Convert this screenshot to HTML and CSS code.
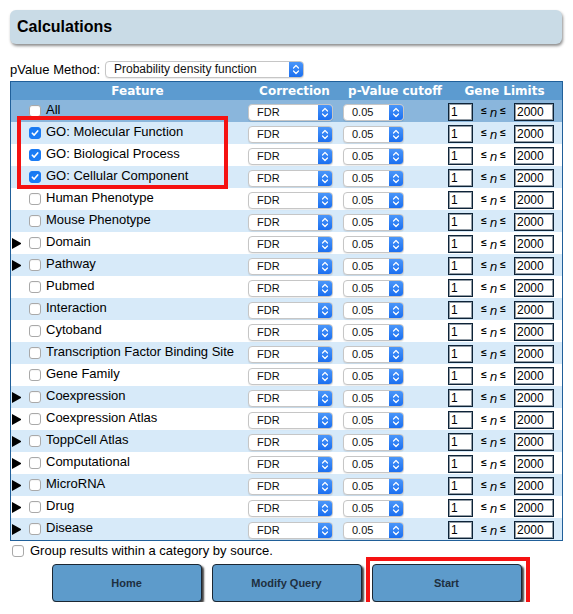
FILE: index.html
```html
<!DOCTYPE html>
<html>
<head>
<meta charset="utf-8">
<title>Calculations</title>
<link rel="stylesheet" href="styles.css">
</head>
<body>
<div class="page">
  <div class="titlebox"><h1>Calculations</h1></div>

  <div class="method">
    <span class="method-label">pValue Method:</span>
    <div class="sel s-wide"><span class="sel-text">Probability density function</span><span class="sel-btn"><svg width="8" height="11" viewBox="0 0 8 11"><path d="M1.5 4 L4 1.5 L6.5 4 M1.5 7 L4 9.5 L6.5 7" fill="none" stroke="#fff" stroke-width="1.2" stroke-linecap="round" stroke-linejoin="round"/></svg></span></div>
  </div>

  <div class="tbl">
    <div class="row head"><div class="c1">Feature</div><div>Correction</div><div>p-Value cutoff</div><div>Gene Limits</div></div>

    <div class="row all">
      <div class="feat"><span class="tri"></span><span class="cb"></span><span class="lbl">All</span></div>
      <div class="corr"><div class="sel s-corr"><span class="sel-text">FDR</span><span class="sel-btn"><svg width="8" height="11" viewBox="0 0 8 11"><path d="M1.5 4 L4 1.5 L6.5 4 M1.5 7 L4 9.5 L6.5 7" fill="none" stroke="#fff" stroke-width="1.2" stroke-linecap="round" stroke-linejoin="round"/></svg></span></div></div>
      <div class="pv"><div class="sel s-pv"><span class="sel-text">0.05</span><span class="sel-btn"><svg width="8" height="11" viewBox="0 0 8 11"><path d="M1.5 4 L4 1.5 L6.5 4 M1.5 7 L4 9.5 L6.5 7" fill="none" stroke="#fff" stroke-width="1.2" stroke-linecap="round" stroke-linejoin="round"/></svg></span></div></div>
      <div class="gl"><span class="inp i1">1</span><span class="rel"><span class="le">≤</span><i>n</i><span class="le">≤</span></span><span class="inp i2">2000</span></div>
    </div>

    <div class="row alt">
      <div class="feat"><span class="tri"></span><span class="cb on"><svg width="8" height="8" viewBox="0 0 8 8"><path d="M1.3 4.2 L3.2 6.1 L6.7 1.9" fill="none" stroke="#fff" stroke-width="1.6" stroke-linecap="round" stroke-linejoin="round"/></svg></span><span class="lbl">GO: Molecular Function</span></div>
      <div class="corr"><div class="sel s-corr"><span class="sel-text">FDR</span><span class="sel-btn"><svg width="8" height="11" viewBox="0 0 8 11"><path d="M1.5 4 L4 1.5 L6.5 4 M1.5 7 L4 9.5 L6.5 7" fill="none" stroke="#fff" stroke-width="1.2" stroke-linecap="round" stroke-linejoin="round"/></svg></span></div></div>
      <div class="pv"><div class="sel s-pv"><span class="sel-text">0.05</span><span class="sel-btn"><svg width="8" height="11" viewBox="0 0 8 11"><path d="M1.5 4 L4 1.5 L6.5 4 M1.5 7 L4 9.5 L6.5 7" fill="none" stroke="#fff" stroke-width="1.2" stroke-linecap="round" stroke-linejoin="round"/></svg></span></div></div>
      <div class="gl"><span class="inp i1">1</span><span class="rel"><span class="le">≤</span><i>n</i><span class="le">≤</span></span><span class="inp i2">2000</span></div>
    </div>

    <div class="row">
      <div class="feat"><span class="tri"></span><span class="cb on"><svg width="8" height="8" viewBox="0 0 8 8"><path d="M1.3 4.2 L3.2 6.1 L6.7 1.9" fill="none" stroke="#fff" stroke-width="1.6" stroke-linecap="round" stroke-linejoin="round"/></svg></span><span class="lbl">GO: Biological Process</span></div>
      <div class="corr"><div class="sel s-corr"><span class="sel-text">FDR</span><span class="sel-btn"><svg width="8" height="11" viewBox="0 0 8 11"><path d="M1.5 4 L4 1.5 L6.5 4 M1.5 7 L4 9.5 L6.5 7" fill="none" stroke="#fff" stroke-width="1.2" stroke-linecap="round" stroke-linejoin="round"/></svg></span></div></div>
      <div class="pv"><div class="sel s-pv"><span class="sel-text">0.05</span><span class="sel-btn"><svg width="8" height="11" viewBox="0 0 8 11"><path d="M1.5 4 L4 1.5 L6.5 4 M1.5 7 L4 9.5 L6.5 7" fill="none" stroke="#fff" stroke-width="1.2" stroke-linecap="round" stroke-linejoin="round"/></svg></span></div></div>
      <div class="gl"><span class="inp i1">1</span><span class="rel"><span class="le">≤</span><i>n</i><span class="le">≤</span></span><span class="inp i2">2000</span></div>
    </div>

    <div class="row alt">
      <div class="feat"><span class="tri"></span><span class="cb on"><svg width="8" height="8" viewBox="0 0 8 8"><path d="M1.3 4.2 L3.2 6.1 L6.7 1.9" fill="none" stroke="#fff" stroke-width="1.6" stroke-linecap="round" stroke-linejoin="round"/></svg></span><span class="lbl">GO: Cellular Component</span></div>
      <div class="corr"><div class="sel s-corr"><span class="sel-text">FDR</span><span class="sel-btn"><svg width="8" height="11" viewBox="0 0 8 11"><path d="M1.5 4 L4 1.5 L6.5 4 M1.5 7 L4 9.5 L6.5 7" fill="none" stroke="#fff" stroke-width="1.2" stroke-linecap="round" stroke-linejoin="round"/></svg></span></div></div>
      <div class="pv"><div class="sel s-pv"><span class="sel-text">0.05</span><span class="sel-btn"><svg width="8" height="11" viewBox="0 0 8 11"><path d="M1.5 4 L4 1.5 L6.5 4 M1.5 7 L4 9.5 L6.5 7" fill="none" stroke="#fff" stroke-width="1.2" stroke-linecap="round" stroke-linejoin="round"/></svg></span></div></div>
      <div class="gl"><span class="inp i1">1</span><span class="rel"><span class="le">≤</span><i>n</i><span class="le">≤</span></span><span class="inp i2">2000</span></div>
    </div>

    <div class="row">
      <div class="feat"><span class="tri"></span><span class="cb"></span><span class="lbl">Human Phenotype</span></div>
      <div class="corr"><div class="sel s-corr"><span class="sel-text">FDR</span><span class="sel-btn"><svg width="8" height="11" viewBox="0 0 8 11"><path d="M1.5 4 L4 1.5 L6.5 4 M1.5 7 L4 9.5 L6.5 7" fill="none" stroke="#fff" stroke-width="1.2" stroke-linecap="round" stroke-linejoin="round"/></svg></span></div></div>
      <div class="pv"><div class="sel s-pv"><span class="sel-text">0.05</span><span class="sel-btn"><svg width="8" height="11" viewBox="0 0 8 11"><path d="M1.5 4 L4 1.5 L6.5 4 M1.5 7 L4 9.5 L6.5 7" fill="none" stroke="#fff" stroke-width="1.2" stroke-linecap="round" stroke-linejoin="round"/></svg></span></div></div>
      <div class="gl"><span class="inp i1">1</span><span class="rel"><span class="le">≤</span><i>n</i><span class="le">≤</span></span><span class="inp i2">2000</span></div>
    </div>

    <div class="row alt">
      <div class="feat"><span class="tri"></span><span class="cb"></span><span class="lbl">Mouse Phenotype</span></div>
      <div class="corr"><div class="sel s-corr"><span class="sel-text">FDR</span><span class="sel-btn"><svg width="8" height="11" viewBox="0 0 8 11"><path d="M1.5 4 L4 1.5 L6.5 4 M1.5 7 L4 9.5 L6.5 7" fill="none" stroke="#fff" stroke-width="1.2" stroke-linecap="round" stroke-linejoin="round"/></svg></span></div></div>
      <div class="pv"><div class="sel s-pv"><span class="sel-text">0.05</span><span class="sel-btn"><svg width="8" height="11" viewBox="0 0 8 11"><path d="M1.5 4 L4 1.5 L6.5 4 M1.5 7 L4 9.5 L6.5 7" fill="none" stroke="#fff" stroke-width="1.2" stroke-linecap="round" stroke-linejoin="round"/></svg></span></div></div>
      <div class="gl"><span class="inp i1">1</span><span class="rel"><span class="le">≤</span><i>n</i><span class="le">≤</span></span><span class="inp i2">2000</span></div>
    </div>

    <div class="row">
      <div class="feat"><span class="tri on"></span><span class="cb"></span><span class="lbl">Domain</span></div>
      <div class="corr"><div class="sel s-corr"><span class="sel-text">FDR</span><span class="sel-btn"><svg width="8" height="11" viewBox="0 0 8 11"><path d="M1.5 4 L4 1.5 L6.5 4 M1.5 7 L4 9.5 L6.5 7" fill="none" stroke="#fff" stroke-width="1.2" stroke-linecap="round" stroke-linejoin="round"/></svg></span></div></div>
      <div class="pv"><div class="sel s-pv"><span class="sel-text">0.05</span><span class="sel-btn"><svg width="8" height="11" viewBox="0 0 8 11"><path d="M1.5 4 L4 1.5 L6.5 4 M1.5 7 L4 9.5 L6.5 7" fill="none" stroke="#fff" stroke-width="1.2" stroke-linecap="round" stroke-linejoin="round"/></svg></span></div></div>
      <div class="gl"><span class="inp i1">1</span><span class="rel"><span class="le">≤</span><i>n</i><span class="le">≤</span></span><span class="inp i2">2000</span></div>
    </div>

    <div class="row alt">
      <div class="feat"><span class="tri on"></span><span class="cb"></span><span class="lbl">Pathway</span></div>
      <div class="corr"><div class="sel s-corr"><span class="sel-text">FDR</span><span class="sel-btn"><svg width="8" height="11" viewBox="0 0 8 11"><path d="M1.5 4 L4 1.5 L6.5 4 M1.5 7 L4 9.5 L6.5 7" fill="none" stroke="#fff" stroke-width="1.2" stroke-linecap="round" stroke-linejoin="round"/></svg></span></div></div>
      <div class="pv"><div class="sel s-pv"><span class="sel-text">0.05</span><span class="sel-btn"><svg width="8" height="11" viewBox="0 0 8 11"><path d="M1.5 4 L4 1.5 L6.5 4 M1.5 7 L4 9.5 L6.5 7" fill="none" stroke="#fff" stroke-width="1.2" stroke-linecap="round" stroke-linejoin="round"/></svg></span></div></div>
      <div class="gl"><span class="inp i1">1</span><span class="rel"><span class="le">≤</span><i>n</i><span class="le">≤</span></span><span class="inp i2">2000</span></div>
    </div>

    <div class="row">
      <div class="feat"><span class="tri"></span><span class="cb"></span><span class="lbl">Pubmed</span></div>
      <div class="corr"><div class="sel s-corr"><span class="sel-text">FDR</span><span class="sel-btn"><svg width="8" height="11" viewBox="0 0 8 11"><path d="M1.5 4 L4 1.5 L6.5 4 M1.5 7 L4 9.5 L6.5 7" fill="none" stroke="#fff" stroke-width="1.2" stroke-linecap="round" stroke-linejoin="round"/></svg></span></div></div>
      <div class="pv"><div class="sel s-pv"><span class="sel-text">0.05</span><span class="sel-btn"><svg width="8" height="11" viewBox="0 0 8 11"><path d="M1.5 4 L4 1.5 L6.5 4 M1.5 7 L4 9.5 L6.5 7" fill="none" stroke="#fff" stroke-width="1.2" stroke-linecap="round" stroke-linejoin="round"/></svg></span></div></div>
      <div class="gl"><span class="inp i1">1</span><span class="rel"><span class="le">≤</span><i>n</i><span class="le">≤</span></span><span class="inp i2">2000</span></div>
    </div>

    <div class="row alt">
      <div class="feat"><span class="tri"></span><span class="cb"></span><span class="lbl">Interaction</span></div>
      <div class="corr"><div class="sel s-corr"><span class="sel-text">FDR</span><span class="sel-btn"><svg width="8" height="11" viewBox="0 0 8 11"><path d="M1.5 4 L4 1.5 L6.5 4 M1.5 7 L4 9.5 L6.5 7" fill="none" stroke="#fff" stroke-width="1.2" stroke-linecap="round" stroke-linejoin="round"/></svg></span></div></div>
      <div class="pv"><div class="sel s-pv"><span class="sel-text">0.05</span><span class="sel-btn"><svg width="8" height="11" viewBox="0 0 8 11"><path d="M1.5 4 L4 1.5 L6.5 4 M1.5 7 L4 9.5 L6.5 7" fill="none" stroke="#fff" stroke-width="1.2" stroke-linecap="round" stroke-linejoin="round"/></svg></span></div></div>
      <div class="gl"><span class="inp i1">1</span><span class="rel"><span class="le">≤</span><i>n</i><span class="le">≤</span></span><span class="inp i2">2000</span></div>
    </div>

    <div class="row">
      <div class="feat"><span class="tri"></span><span class="cb"></span><span class="lbl">Cytoband</span></div>
      <div class="corr"><div class="sel s-corr"><span class="sel-text">FDR</span><span class="sel-btn"><svg width="8" height="11" viewBox="0 0 8 11"><path d="M1.5 4 L4 1.5 L6.5 4 M1.5 7 L4 9.5 L6.5 7" fill="none" stroke="#fff" stroke-width="1.2" stroke-linecap="round" stroke-linejoin="round"/></svg></span></div></div>
      <div class="pv"><div class="sel s-pv"><span class="sel-text">0.05</span><span class="sel-btn"><svg width="8" height="11" viewBox="0 0 8 11"><path d="M1.5 4 L4 1.5 L6.5 4 M1.5 7 L4 9.5 L6.5 7" fill="none" stroke="#fff" stroke-width="1.2" stroke-linecap="round" stroke-linejoin="round"/></svg></span></div></div>
      <div class="gl"><span class="inp i1">1</span><span class="rel"><span class="le">≤</span><i>n</i><span class="le">≤</span></span><span class="inp i2">2000</span></div>
    </div>

    <div class="row alt">
      <div class="feat"><span class="tri"></span><span class="cb"></span><span class="lbl">Transcription Factor Binding Site</span></div>
      <div class="corr"><div class="sel s-corr"><span class="sel-text">FDR</span><span class="sel-btn"><svg width="8" height="11" viewBox="0 0 8 11"><path d="M1.5 4 L4 1.5 L6.5 4 M1.5 7 L4 9.5 L6.5 7" fill="none" stroke="#fff" stroke-width="1.2" stroke-linecap="round" stroke-linejoin="round"/></svg></span></div></div>
      <div class="pv"><div class="sel s-pv"><span class="sel-text">0.05</span><span class="sel-btn"><svg width="8" height="11" viewBox="0 0 8 11"><path d="M1.5 4 L4 1.5 L6.5 4 M1.5 7 L4 9.5 L6.5 7" fill="none" stroke="#fff" stroke-width="1.2" stroke-linecap="round" stroke-linejoin="round"/></svg></span></div></div>
      <div class="gl"><span class="inp i1">1</span><span class="rel"><span class="le">≤</span><i>n</i><span class="le">≤</span></span><span class="inp i2">2000</span></div>
    </div>

    <div class="row">
      <div class="feat"><span class="tri"></span><span class="cb"></span><span class="lbl">Gene Family</span></div>
      <div class="corr"><div class="sel s-corr"><span class="sel-text">FDR</span><span class="sel-btn"><svg width="8" height="11" viewBox="0 0 8 11"><path d="M1.5 4 L4 1.5 L6.5 4 M1.5 7 L4 9.5 L6.5 7" fill="none" stroke="#fff" stroke-width="1.2" stroke-linecap="round" stroke-linejoin="round"/></svg></span></div></div>
      <div class="pv"><div class="sel s-pv"><span class="sel-text">0.05</span><span class="sel-btn"><svg width="8" height="11" viewBox="0 0 8 11"><path d="M1.5 4 L4 1.5 L6.5 4 M1.5 7 L4 9.5 L6.5 7" fill="none" stroke="#fff" stroke-width="1.2" stroke-linecap="round" stroke-linejoin="round"/></svg></span></div></div>
      <div class="gl"><span class="inp i1">1</span><span class="rel"><span class="le">≤</span><i>n</i><span class="le">≤</span></span><span class="inp i2">2000</span></div>
    </div>

    <div class="row alt">
      <div class="feat"><span class="tri on"></span><span class="cb"></span><span class="lbl">Coexpression</span></div>
      <div class="corr"><div class="sel s-corr"><span class="sel-text">FDR</span><span class="sel-btn"><svg width="8" height="11" viewBox="0 0 8 11"><path d="M1.5 4 L4 1.5 L6.5 4 M1.5 7 L4 9.5 L6.5 7" fill="none" stroke="#fff" stroke-width="1.2" stroke-linecap="round" stroke-linejoin="round"/></svg></span></div></div>
      <div class="pv"><div class="sel s-pv"><span class="sel-text">0.05</span><span class="sel-btn"><svg width="8" height="11" viewBox="0 0 8 11"><path d="M1.5 4 L4 1.5 L6.5 4 M1.5 7 L4 9.5 L6.5 7" fill="none" stroke="#fff" stroke-width="1.2" stroke-linecap="round" stroke-linejoin="round"/></svg></span></div></div>
      <div class="gl"><span class="inp i1">1</span><span class="rel"><span class="le">≤</span><i>n</i><span class="le">≤</span></span><span class="inp i2">2000</span></div>
    </div>

    <div class="row">
      <div class="feat"><span class="tri on"></span><span class="cb"></span><span class="lbl">Coexpression Atlas</span></div>
      <div class="corr"><div class="sel s-corr"><span class="sel-text">FDR</span><span class="sel-btn"><svg width="8" height="11" viewBox="0 0 8 11"><path d="M1.5 4 L4 1.5 L6.5 4 M1.5 7 L4 9.5 L6.5 7" fill="none" stroke="#fff" stroke-width="1.2" stroke-linecap="round" stroke-linejoin="round"/></svg></span></div></div>
      <div class="pv"><div class="sel s-pv"><span class="sel-text">0.05</span><span class="sel-btn"><svg width="8" height="11" viewBox="0 0 8 11"><path d="M1.5 4 L4 1.5 L6.5 4 M1.5 7 L4 9.5 L6.5 7" fill="none" stroke="#fff" stroke-width="1.2" stroke-linecap="round" stroke-linejoin="round"/></svg></span></div></div>
      <div class="gl"><span class="inp i1">1</span><span class="rel"><span class="le">≤</span><i>n</i><span class="le">≤</span></span><span class="inp i2">2000</span></div>
    </div>

    <div class="row alt">
      <div class="feat"><span class="tri on"></span><span class="cb"></span><span class="lbl">ToppCell Atlas</span></div>
      <div class="corr"><div class="sel s-corr"><span class="sel-text">FDR</span><span class="sel-btn"><svg width="8" height="11" viewBox="0 0 8 11"><path d="M1.5 4 L4 1.5 L6.5 4 M1.5 7 L4 9.5 L6.5 7" fill="none" stroke="#fff" stroke-width="1.2" stroke-linecap="round" stroke-linejoin="round"/></svg></span></div></div>
      <div class="pv"><div class="sel s-pv"><span class="sel-text">0.05</span><span class="sel-btn"><svg width="8" height="11" viewBox="0 0 8 11"><path d="M1.5 4 L4 1.5 L6.5 4 M1.5 7 L4 9.5 L6.5 7" fill="none" stroke="#fff" stroke-width="1.2" stroke-linecap="round" stroke-linejoin="round"/></svg></span></div></div>
      <div class="gl"><span class="inp i1">1</span><span class="rel"><span class="le">≤</span><i>n</i><span class="le">≤</span></span><span class="inp i2">2000</span></div>
    </div>

    <div class="row">
      <div class="feat"><span class="tri on"></span><span class="cb"></span><span class="lbl">Computational</span></div>
      <div class="corr"><div class="sel s-corr"><span class="sel-text">FDR</span><span class="sel-btn"><svg width="8" height="11" viewBox="0 0 8 11"><path d="M1.5 4 L4 1.5 L6.5 4 M1.5 7 L4 9.5 L6.5 7" fill="none" stroke="#fff" stroke-width="1.2" stroke-linecap="round" stroke-linejoin="round"/></svg></span></div></div>
      <div class="pv"><div class="sel s-pv"><span class="sel-text">0.05</span><span class="sel-btn"><svg width="8" height="11" viewBox="0 0 8 11"><path d="M1.5 4 L4 1.5 L6.5 4 M1.5 7 L4 9.5 L6.5 7" fill="none" stroke="#fff" stroke-width="1.2" stroke-linecap="round" stroke-linejoin="round"/></svg></span></div></div>
      <div class="gl"><span class="inp i1">1</span><span class="rel"><span class="le">≤</span><i>n</i><span class="le">≤</span></span><span class="inp i2">2000</span></div>
    </div>

    <div class="row alt">
      <div class="feat"><span class="tri on"></span><span class="cb"></span><span class="lbl">MicroRNA</span></div>
      <div class="corr"><div class="sel s-corr"><span class="sel-text">FDR</span><span class="sel-btn"><svg width="8" height="11" viewBox="0 0 8 11"><path d="M1.5 4 L4 1.5 L6.5 4 M1.5 7 L4 9.5 L6.5 7" fill="none" stroke="#fff" stroke-width="1.2" stroke-linecap="round" stroke-linejoin="round"/></svg></span></div></div>
      <div class="pv"><div class="sel s-pv"><span class="sel-text">0.05</span><span class="sel-btn"><svg width="8" height="11" viewBox="0 0 8 11"><path d="M1.5 4 L4 1.5 L6.5 4 M1.5 7 L4 9.5 L6.5 7" fill="none" stroke="#fff" stroke-width="1.2" stroke-linecap="round" stroke-linejoin="round"/></svg></span></div></div>
      <div class="gl"><span class="inp i1">1</span><span class="rel"><span class="le">≤</span><i>n</i><span class="le">≤</span></span><span class="inp i2">2000</span></div>
    </div>

    <div class="row">
      <div class="feat"><span class="tri on"></span><span class="cb"></span><span class="lbl">Drug</span></div>
      <div class="corr"><div class="sel s-corr"><span class="sel-text">FDR</span><span class="sel-btn"><svg width="8" height="11" viewBox="0 0 8 11"><path d="M1.5 4 L4 1.5 L6.5 4 M1.5 7 L4 9.5 L6.5 7" fill="none" stroke="#fff" stroke-width="1.2" stroke-linecap="round" stroke-linejoin="round"/></svg></span></div></div>
      <div class="pv"><div class="sel s-pv"><span class="sel-text">0.05</span><span class="sel-btn"><svg width="8" height="11" viewBox="0 0 8 11"><path d="M1.5 4 L4 1.5 L6.5 4 M1.5 7 L4 9.5 L6.5 7" fill="none" stroke="#fff" stroke-width="1.2" stroke-linecap="round" stroke-linejoin="round"/></svg></span></div></div>
      <div class="gl"><span class="inp i1">1</span><span class="rel"><span class="le">≤</span><i>n</i><span class="le">≤</span></span><span class="inp i2">2000</span></div>
    </div>

    <div class="row alt">
      <div class="feat"><span class="tri on"></span><span class="cb"></span><span class="lbl">Disease</span></div>
      <div class="corr"><div class="sel s-corr"><span class="sel-text">FDR</span><span class="sel-btn"><svg width="8" height="11" viewBox="0 0 8 11"><path d="M1.5 4 L4 1.5 L6.5 4 M1.5 7 L4 9.5 L6.5 7" fill="none" stroke="#fff" stroke-width="1.2" stroke-linecap="round" stroke-linejoin="round"/></svg></span></div></div>
      <div class="pv"><div class="sel s-pv"><span class="sel-text">0.05</span><span class="sel-btn"><svg width="8" height="11" viewBox="0 0 8 11"><path d="M1.5 4 L4 1.5 L6.5 4 M1.5 7 L4 9.5 L6.5 7" fill="none" stroke="#fff" stroke-width="1.2" stroke-linecap="round" stroke-linejoin="round"/></svg></span></div></div>
      <div class="gl"><span class="inp i1">1</span><span class="rel"><span class="le">≤</span><i>n</i><span class="le">≤</span></span><span class="inp i2">2000</span></div>
    </div>

    <div class="annot-go"></div>
  </div>

  <div class="group"><span class="cb"></span><span>Group results within a category by source.</span></div>

  <div class="buttons">
    <button class="btn">Home</button>
    <button class="btn">Modify Query</button>
    <button class="btn start">Start</button>
  </div>
</div>
</body>
</html>
```

FILE: styles.css
```css
* { box-sizing: border-box; }

body {
  margin: 0;
  background: #fff;
  color: #000;
  font-family: "Liberation Sans", Arial, sans-serif;
}

.page {
  width: 573px;
  padding: 10px 10px 0 10px;
}

.titlebox {
  width: 552px;
  height: 34px;
  background: #c9dbe6;
  border-radius: 6px;
  box-shadow: 1px 2px 3px rgba(0, 0, 0, 0.45);
  padding-left: 7px;
}

.titlebox h1 {
  margin: 0;
  font-size: 16px;
  font-weight: bold;
  line-height: 34px;
}

.method {
  margin-top: 17px;
  height: 17px;
  display: flex;
  align-items: center;
}

.method-label {
  width: 95px;
  font-size: 13px;
  white-space: nowrap;
}

/* mac-like select */
.sel {
  display: flex;
  height: 17px;
  background: #fff;
  border: 1px solid #c6c6c6;
  border-radius: 4px;
  box-shadow: 0 1px 1px rgba(0, 0, 0, 0.08);
  overflow: hidden;
}

.sel-text {
  flex: 1;
  padding-left: 8px;
  font-size: 11px;
  line-height: 15px;
  color: #111;
  white-space: nowrap;
}

.s-wide { width: 199px; }
.s-wide .sel-text { font-size: 12px; }

.sel-btn {
  width: 14px;
  flex: none;
  display: flex;
  align-items: center;
  justify-content: center;
  background: linear-gradient(#4a96f9, #1b6ff0);
}

/* table */
.tbl {
  position: relative;
  width: 553px;
  margin-top: 3px;
  border: 1px solid #21609a;
}

.row {
  display: grid;
  grid-template-columns: 235px 97px 104px 115px;
  height: 22px;
  align-items: center;
}

.head {
  height: 18px;
  background: #5c9bd0;
  color: #fff;
  font-family: "DejaVu Sans", Verdana, sans-serif;
  font-weight: bold;
  font-size: 12px;
  line-height: 18px;
  text-align: center;
}

.head .c1 { padding-left: 18px; }

.all { background: #8ab6dc; }
.alt { background: #d7eaf9; }

.feat {
  display: flex;
  align-items: center;
  height: 22px;
  padding-left: 1px;
}

.tri {
  flex: none;
  width: 9px;
  height: 11px;
}

.tri.on {
  border-left: 9px solid #000;
  border-top: 5.5px solid transparent;
  border-bottom: 5.5px solid transparent;
}

.cb {
  flex: none;
  width: 12px;
  height: 12px;
  margin-left: 8px;
  background: #fff;
  border: 1px solid #a9a9a9;
  border-radius: 3px;
  box-shadow: inset 0 1px 1px rgba(0, 0, 0, 0.04);
}

.cb.on {
  background: #1a7cf5;
  border-color: #1a7cf5;
  display: flex;
  align-items: center;
  justify-content: center;
}

.lbl {
  margin-left: 5px;
  font-size: 13px;
  position: relative;
  top: -2px;
  white-space: nowrap;
}

.corr { padding-left: 2px; }
.corr, .pv { margin-top: 2px; }
.s-corr { width: 85px; }
.s-pv { width: 61px; }

.gl {
  display: flex;
  align-items: center;
  padding-left: 1px;
  margin-top: 2px;
}

.inp {
  height: 18px;
  background: #fff;
  border: 1px solid #0d2338;
  box-shadow: inset 0 0 0 1px rgba(13, 35, 56, 0.45);
  font-size: 12px;
  line-height: 16px;
  padding-left: 2px;
}

.i1 { width: 25px; }
.i2 { width: 40px; }

.rel {
  width: 41px;
  text-align: center;
  font-size: 12px;
  white-space: nowrap;
}

.le {
  font-size: 10px;
  font-weight: bold;
  vertical-align: 3px;
}

.rel i {
  font-family: "DejaVu Sans", sans-serif;
  font-style: italic;
  font-size: 12px;
  margin: 0 3px;
}

.annot-go {
  position: absolute;
  left: 6px;
  top: 34px;
  width: 211px;
  height: 73px;
  border: 4px solid #f51212;
  pointer-events: none;
}

.group {
  display: flex;
  align-items: center;
  height: 17px;
  margin-top: 1px;
  padding-left: 2px;
  font-size: 13px;
}

.group .cb {
  margin-left: 0;
  margin-right: 6px;
}

.buttons {
  width: 553px;
  margin-top: 5px;
  display: flex;
  justify-content: center;
  gap: 10px;
}

.btn {
  position: relative;
  width: 150px;
  height: 38px;
  padding: 0;
  background: #5d9bcb;
  border: 1px solid #1b2733;
  border-radius: 4px;
  box-shadow: 2px 2px 2px rgba(0, 0, 0, 0.75);
  font-family: "Liberation Sans", Arial, sans-serif;
  font-weight: bold;
  font-size: 11px;
  color: #1d2f40;
}

.start::after {
  content: "";
  position: absolute;
  left: -7px;
  top: -8px;
  right: -9px;
  bottom: -10px;
  border: 4px solid #f51212;
  pointer-events: none;
}
```
